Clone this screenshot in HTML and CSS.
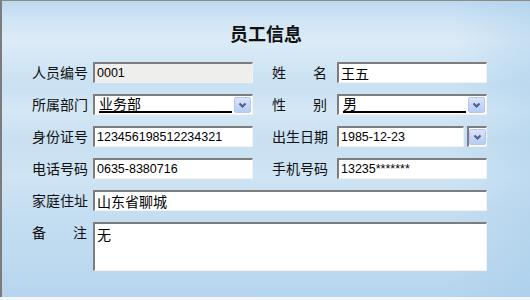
FILE: index.html
```html
<!DOCTYPE html>
<html lang="zh-CN">
<head>
<meta charset="utf-8">
<title>员工信息</title>
<link rel="stylesheet" href="styles.css">
</head>
<body>
<div class="window">
  <h1 class="title">员工信息</h1>
  <div class="form">
    <div class="lbl">人员编号</div>
    <div class="field readonly num">0001</div>
    <div class="lbl spread"><span>姓</span><span>名</span></div>
    <div class="field right">王五</div>

    <div class="lbl">所属部门</div>
    <div class="field select">
      <span class="sel-text">业务部</span>
      <span class="drop"><svg width="9" height="7" viewBox="0 0 9 7"><polyline points="1.5,1.5 4.5,4.5 7.5,1.5" fill="none" stroke="#4a5f8c" stroke-width="2"/></svg></span>
    </div>
    <div class="lbl spread"><span>性</span><span>别</span></div>
    <div class="field select right">
      <span class="sel-text">男</span>
      <span class="drop"><svg width="9" height="7" viewBox="0 0 9 7"><polyline points="1.5,1.5 4.5,4.5 7.5,1.5" fill="none" stroke="#4a5f8c" stroke-width="2"/></svg></span>
    </div>

    <div class="lbl">身份证号</div>
    <div class="field num">123456198512234321</div>
    <div class="lbl">出生日期</div>
    <div class="date right">
      <div class="field num date-input">1985-12-23</div>
      <div class="field date-btn">
        <span class="drop"><svg width="9" height="7" viewBox="0 0 9 7"><polyline points="1.5,1.5 4.5,4.5 7.5,1.5" fill="none" stroke="#4a5f8c" stroke-width="2"/></svg></span>
      </div>
    </div>

    <div class="lbl">电话号码</div>
    <div class="field num">0635-8380716</div>
    <div class="lbl">手机号码</div>
    <div class="field num right">13235*******</div>

    <div class="lbl">家庭住址</div>
    <div class="field wide">山东省聊城</div>

    <div class="lbl spread top"><span>备</span><span>注</span></div>
    <div class="field wide area">无</div>
  </div>
</div>
</body>
</html>
```
FILE: styles.css
```css
html, body {
  margin: 0;
  padding: 0;
}
body {
  width: 530px;
  height: 300px;
  background: #f4f8fc;
  font-family: "Noto Sans CJK SC", "Liberation Sans", sans-serif;
  color: #111;
  overflow: hidden;
}
.window {
  box-sizing: border-box;
  height: 297px;
  border-top: 1px solid #8d8a80;
  border-left: 2px solid #7c7c7c;
  background:
    linear-gradient(90deg, rgba(255,255,255,0) 0%, rgba(255,255,255,0) 85%, rgba(160,200,232,0.35) 100%),
    linear-gradient(180deg,
      #bcd9f0 0px,
      #cfe4f4 18px,
      #dcebf7 40px,
      #d2e6f5 62px,
      #c9e1f3 85px,
      #d4e7f5 110px,
      #c8e0f2 140px,
      #cfe4f4 175px,
      #c4ddf1 215px,
      #bfdbf0 250px,
      #b6d5ee 296px);
}
.title {
  margin: 0;
  padding-top: 20px;
  text-align: center;
  font-size: 18px;
  line-height: 24px;
  font-weight: bold;
  color: #111;
}
.form {
  display: grid;
  grid-template-columns: 61px 179px 65px 150px;
  grid-template-rows: repeat(5, 21px) 49px;
  row-gap: 11px;
  padding-left: 30px;
  margin-top: 17px;
}
.lbl {
  display: flex;
  align-items: center;
  width: 55px;
  font-size: 14px;
  line-height: 21px;
  white-space: nowrap;
}
.spread {
  justify-content: space-between;
}
.top {
  align-self: start;
  height: 21px;
}
.field {
  box-sizing: border-box;
  height: 21px;
  width: 160px;
  border-style: solid;
  border-width: 2px 1px 1px 2px;
  border-color: #7d7d7d #f2f2f2 #f2f2f2 #7d7d7d;
  background: #fff;
  display: flex;
  align-items: center;
  padding-left: 2px;
  font-size: 14px;
  line-height: 16px;
  color: #000;
  white-space: nowrap;
}
.right {
  width: 150px;
}
.readonly {
  background: #eeeeec;
}
.num {
  font-family: "Liberation Sans", sans-serif;
  font-size: 12.5px;
}
.wide {
  grid-column: 2 / 5;
  width: 394px;
}
.area {
  height: 49px;
  align-items: flex-start;
  padding-top: 2px;
}
.select {
  padding-right: 1px;
}
.sel-text {
  flex: 1;
  align-self: flex-end;
  margin: 0 2px 1px 2px;
  border-bottom: 2px solid #000;
  line-height: 15px;
}
.drop {
  box-sizing: border-box;
  width: 17px;
  height: 16px;
  border: 1px solid #b4c6ee;
  border-radius: 2px;
  background: linear-gradient(180deg, #dbe5fb 0%, #c3d4f7 60%, #b8cbf3 100%);
  display: flex;
  align-items: center;
  justify-content: center;
}
.date {
  display: flex;
  gap: 3px;
  width: 150px;
}
.date-input {
  width: 127px;
}
.date-btn {
  width: 20px;
  padding: 0;
  justify-content: center;
}
```
